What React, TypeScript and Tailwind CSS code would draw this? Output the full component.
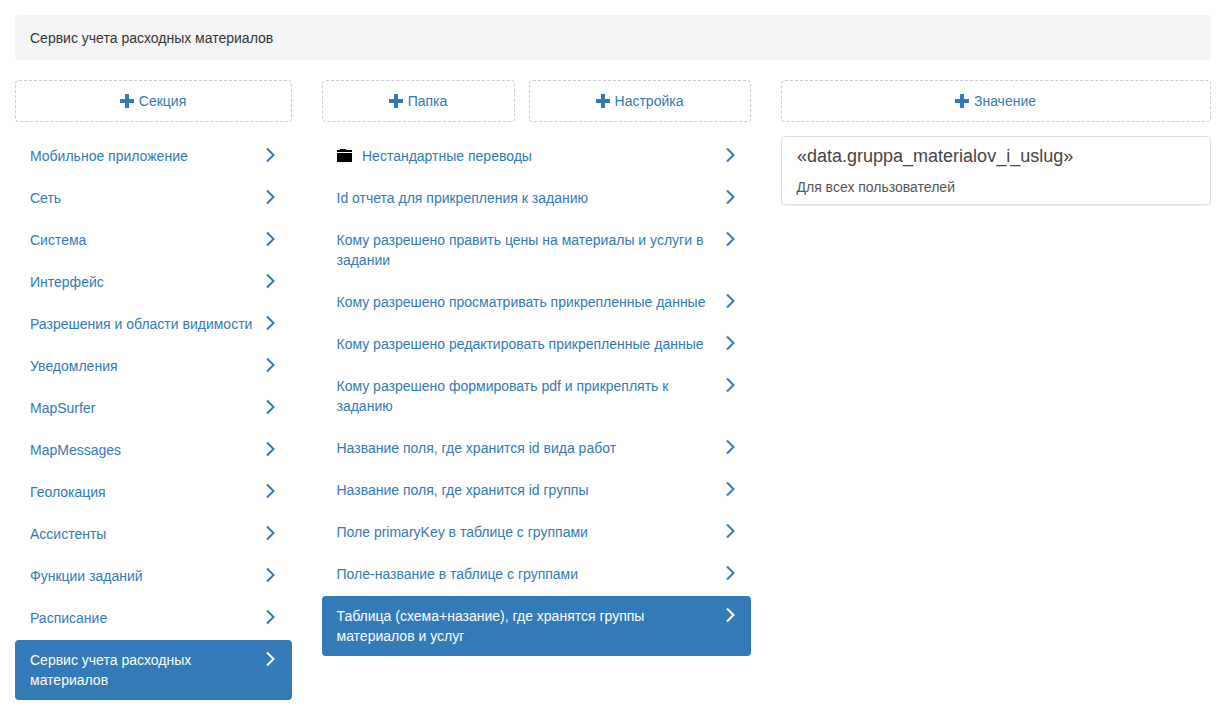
const SECTIONS = [
  'Мобильное приложение',
  'Сеть',
  'Система',
  'Интерфейс',
  'Разрешения и области видимости',
  'Уведомления',
  'MapSurfer',
  'MapMessages',
  'Геолокация',
  'Ассистенты',
  'Функции заданий',
  'Расписание',
  'Сервис учета расходных материалов',
]

const SETTINGS = [
  'Id отчета для прикрепления к заданию',
  'Кому разрешено править цены на материалы и услуги в задании',
  'Кому разрешено просматривать прикрепленные данные',
  'Кому разрешено редактировать прикрепленные данные',
  'Кому разрешено формировать pdf и прикреплять к заданию',
  'Название поля, где хранится id вида работ',
  'Название поля, где хранится id группы',
  'Поле primaryKey в таблице с группами',
  'Поле-название в таблице с группами',
  'Таблица (схема+назание), где хранятся группы материалов и услуг',
]

function PlusIcon() {
  return (
    <svg width="14" height="14" viewBox="0 0 14 14" className="-mt-px shrink-0 fill-[#337ab7]">
      <path d="M5 0h4v5h5v4H9v5H5V9H0V5h5z" />
    </svg>
  )
}

function AddButton({ label, className }: { label: string; className: string }) {
  return (
    <button className={`flex h-[42px] items-center justify-center gap-[5px] rounded border border-dashed border-[#ccc] bg-white text-[#337ab7] ${className}`}>
      <PlusIcon />
      <span className="mr-px">{label}</span>
    </button>
  )
}

function Chevron({ right }: { right: string }) {
  return (
    <svg width="11" height="16" viewBox="0 0 11 16" fill="none" className={`absolute top-[11px] stroke-current ${right}`}>
      <path d="M2 1.5 8.5 8 2 14.5" strokeWidth="2" />
    </svg>
  )
}

function FolderIcon() {
  return (
    <svg width="15" height="13" viewBox="0 0 15 13" className="mr-[10.5px] mt-[3px] shrink-0 fill-black">
      <path d="M3 0h6v1h6v2H0V1h3zM0 4h15v9H0z" />
    </svg>
  )
}

function Row({ label, active, folder, pad, right }: { label: string; active?: boolean; folder?: boolean; pad: string; right: string }) {
  return (
    <a className={`relative flex rounded py-[10px] leading-5 ${pad} ${active ? 'bg-[#337ab7] text-white' : 'text-[#337ab7]'}`}>
      {folder && <FolderIcon />}
      <span>{label}</span>
      <Chevron right={right} />
    </a>
  )
}

export default function App() {
  return (
    <div className="bg-white py-[15px] pl-[15px] pr-[14px] font-['Liberation_Sans',Arial,sans-serif] text-sm leading-5 text-[#333]">
      <div className="mb-5 flex h-[45px] items-center rounded bg-[#f5f5f5] px-[15px]">Сервис учета расходных материалов</div>
      <div className="flex gap-[30px]">
        <div className="w-[277px] shrink-0">
          <AddButton label="Секция" className="w-full" />
          <div className="mt-[14px] flex flex-col gap-[2px]">
            {SECTIONS.map((s, i) => (
              <Row key={s} label={s} pad="pl-[15px] pr-[37px]" right="right-4" active={i === SECTIONS.length - 1} />
            ))}
          </div>
        </div>
        <div className="w-[429px] shrink-0">
          <div className="flex gap-[14px]">
            <AddButton label="Папка" className="w-[193px]" />
            <AddButton label="Настройка" className="w-[222px]" />
          </div>
          <div className="mt-[14px] flex flex-col gap-[2px]">
            <Row label="Нестандартные переводы" pad="pl-[14.5px] pr-[45px]" right="right-[15px]" folder />
            {SETTINGS.map((s, i) => (
              <Row key={s} label={s} pad="pl-[14.5px] pr-[45px]" right="right-[15px]" active={i === SETTINGS.length - 1} />
            ))}
          </div>
        </div>
        <div className="flex-1">
          <AddButton label="Значение" className="w-full" />
          <div className="mt-[14px] h-[69px] rounded border border-[#ddd] bg-white px-[14.5px] pt-[9px] shadow-[0_1px_1px_rgba(0,0,0,0.05)]">
            <div className="pl-[0.5px] text-lg leading-5 text-[#444]">«data.gruppa_materialov_i_uslug»</div>
            <div className="mt-[11px] text-[#555]">Для всех пользователей</div>
          </div>
        </div>
      </div>
    </div>
  )
}
